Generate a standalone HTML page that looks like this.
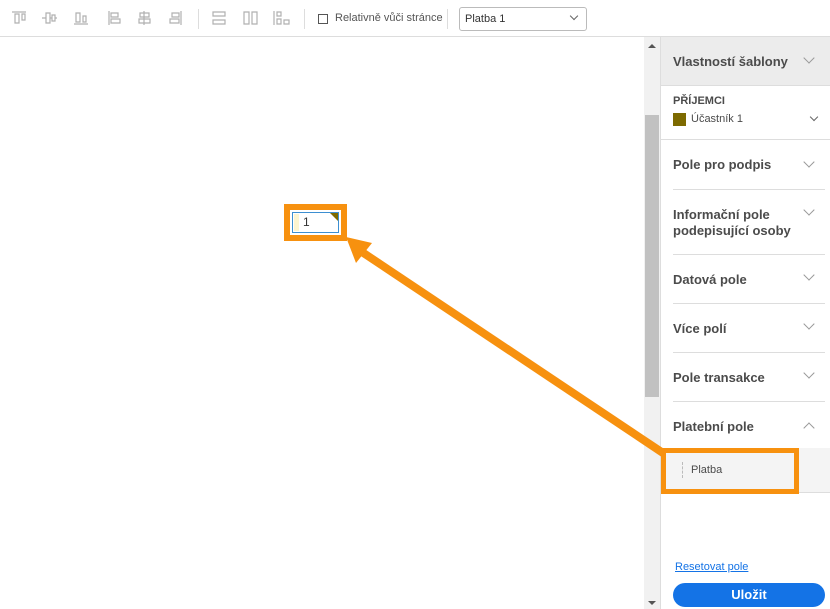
<!DOCTYPE html><html><head><meta charset="utf-8"><style>
*{margin:0;padding:0;box-sizing:border-box}
body{width:830px;height:609px;overflow:hidden;background:#fff;font-family:"Liberation Sans",sans-serif;position:relative;color:#4b4b4b}
.a{position:absolute}
.tb{left:0;top:0;width:830px;height:37px;border-bottom:1px solid #ddd;background:#fff}
.sec{position:absolute;left:673px;width:152px;border-top:1px solid #ddd;font-weight:bold;font-size:13px;color:#4b4b4b}
.chev{position:absolute;right:10px;width:8px;height:8px;border-right:1px solid #999;border-bottom:1px solid #999;transform:rotate(45deg)}
</style></head><body>
<div class="a tb"></div>
<svg class="a" style="left:0;top:0" width="300" height="37" stroke="#b0b0b0" fill="none" stroke-width="1.2">
<path d="M12 12h14M15 14v9h4v-9zM22 14v6h3v-6z"/>
<path d="M42 18h4M46 13v10h4V13zM50 18h2M52 15v6h3v-6zM55 18h2"/>
<path d="M74 24h14M76 13v9h4v-9zM83 16v6h3v-6z"/>
<path d="M109 11v14M111 13h7v4h-7zM111 19h9v4h-9z"/>
<path d="M144 11v14M140 13h9v4h-9zM139 19h11v4h-11z"/>
<path d="M181 11v14M172 13h7v4h-7zM170 19h9v4h-9z"/>
<path d="M213 12h12v4h-12zM213 20h12v4h-12z"/>
<path d="M244 12h5v12h-5zM252 12h5v12h-5z"/>
<path d="M274 11v14M277 12h4v4h-4zM277 19h4v5h-4zM284 20h5v4h-5z"/>
</svg>
<div class="a" style="left:198px;top:9px;width:1px;height:20px;background:#ddd"></div>
<div class="a" style="left:304px;top:9px;width:1px;height:20px;background:#ddd"></div>
<div class="a" style="left:447px;top:9px;width:1px;height:20px;background:#ddd"></div>
<div class="a" style="left:318px;top:14px;width:10px;height:10px;border:1.5px solid #555"></div>
<div class="a" style="left:335px;top:12px;font-size:11px;color:#555">Relativně vůči stránce</div>
<div class="a" style="left:459px;top:7px;width:128px;height:24px;border:1px solid #bbb;border-radius:3px;font-size:11px;padding:5px 5px;color:#333">Platba 1</div>
<div class="a" style="left:571px;top:13px;width:6px;height:6px;border-right:1.2px solid #666;border-bottom:1.2px solid #666;transform:rotate(45deg)"></div>
<div class="a" style="left:644px;top:37px;width:16px;height:572px;background:#f1f1f1"></div>
<div class="a" style="left:645px;top:115px;width:14px;height:282px;background:#c1c1c1"></div>
<div class="a" style="left:648px;top:44px;border:4px solid transparent;border-bottom:4px solid #555;border-top:0"></div>
<div class="a" style="left:648px;top:601px;border:4px solid transparent;border-top:4px solid #555;border-bottom:0"></div>
<div class="a" style="left:660px;top:37px;width:170px;height:572px;border-left:1px solid #ddd;background:#fff"></div>
<div class="a" style="left:661px;top:37px;width:169px;height:49px;background:#ececec;border-bottom:1px solid #ddd"></div>
<div class="a" style="left:673px;top:54px;font-size:13px;font-weight:bold">Vlastností šablony</div>
<div class="chev" style="left:805px;top:54px"></div>
<div class="a" style="left:673px;top:95px;font-size:11px;font-weight:bold">PŘÍJEMCI</div>
<div class="a" style="left:673px;top:113px;width:13px;height:13px;background:#7d6a00"></div>
<div class="a" style="left:691px;top:113px;font-size:11px">Účastník 1</div>
<div class="a" style="left:811px;top:114px;width:6px;height:6px;border-right:1.2px solid #666;border-bottom:1.2px solid #666;transform:rotate(45deg)"></div>
<div class="a" style="left:661px;top:139px;width:169px;border-top:1px solid #ddd"></div>
<div class="sec" style="top:140px;border:0;padding-top:17px">Pole pro podpis<div class="chev" style="top:18px;right:12px"></div></div>
<div class="sec" style="top:189px;padding-top:17px;line-height:16px">Informační pole<br>podepisující osoby<div class="chev" style="top:16px;right:12px"></div></div>
<div class="sec" style="top:254px;padding-top:17px">Datová pole<div class="chev" style="top:16px;right:12px"></div></div>
<div class="sec" style="top:303px;padding-top:17px">Více polí<div class="chev" style="top:16px;right:12px"></div></div>
<div class="sec" style="top:352px;padding-top:17px">Pole transakce<div class="chev" style="top:16px;right:12px"></div></div>
<div class="sec" style="top:401px;padding-top:17px">Platební pole<div style="position:absolute;right:12px;top:22px;width:8px;height:8px;border-left:1px solid #999;border-top:1px solid #999;transform:rotate(45deg)"></div></div>
<div class="a" style="left:661px;top:448px;width:169px;height:45px;background:#f4f4f4;border-bottom:1px solid #ddd"></div>
<div class="a" style="left:682px;top:462px;width:1px;height:16px;border-left:1px dashed #bbb"></div>
<div class="a" style="left:691px;top:464px;font-size:11px">Platba</div>
<div class="a" style="left:661px;top:448px;width:138px;height:46px;border:5px solid #f7910f"></div>
<div class="a" style="left:675px;top:561px;font-size:11px;color:#1473e6;text-decoration:underline">Resetovat pole</div>
<div class="a" style="left:673px;top:583px;width:152px;height:24px;border-radius:12px;background:#1473e6;color:#fff;font-weight:bold;font-size:13px;text-align:center;line-height:24px">Uložit</div>
<div class="a" style="left:284px;top:204px;width:63px;height:37px;background:#f7910f"></div>
<div class="a" style="left:290px;top:210px;width:51px;height:25px;background:#fff"></div>
<div class="a" style="left:292px;top:212px;width:47px;height:21px;border:1px solid #3d8fd1;background:#fff"></div>
<div class="a" style="left:294px;top:214px;width:5px;height:17px;background:#fdf5d0"></div>
<div class="a" style="left:303px;top:215px;font-size:12px;color:#333">1</div>
<div class="a" style="left:330px;top:213px;width:0;height:0;border-top:8px solid #7d6a00;border-left:8px solid transparent"></div>
<svg class="a" style="left:0;top:0" width="830" height="609">
<line x1="663" y1="453" x2="362" y2="252" stroke="#f7910f" stroke-width="8"/>
<polygon points="346,237 372,243 356,263" fill="#f7910f"/>
</svg>
</body></html>
